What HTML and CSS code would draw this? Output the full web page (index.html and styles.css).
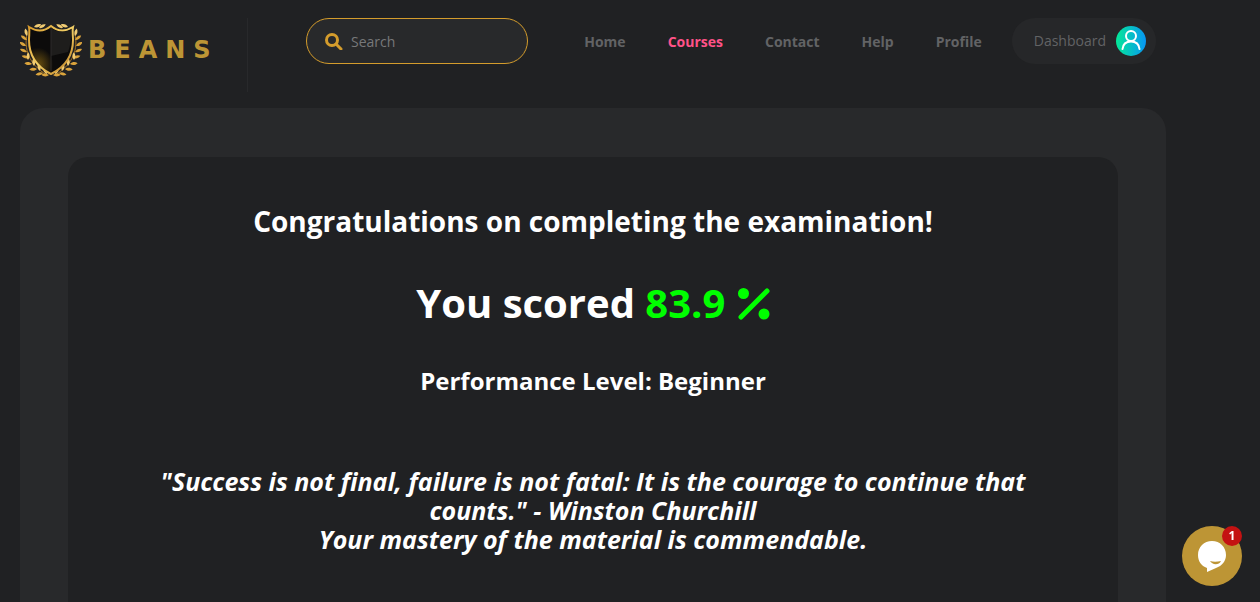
FILE: index.html
```
<!DOCTYPE html>
<html lang="en">
<head>
    <meta charset="UTF-8">
    <meta name="viewport" content="width=device-width, initial-scale=1">
    <title>Beans</title>
    <link rel="stylesheet" href="styles.css">
</head>
<body>
<header class="header">
    <a class="brand" href="#">
        <svg class="brand-logo" viewBox="0 0 62 56" aria-hidden="true">
            <defs>
                <linearGradient id="gold" x1="0" y1="0" x2="1" y2="1">
                    <stop offset="0" stop-color="#d99b2b"/>
                    <stop offset="0.5" stop-color="#f3d067"/>
                    <stop offset="1" stop-color="#b9791c"/>
                </linearGradient>
                <radialGradient id="shine" cx="0.2" cy="0.8" r="0.35">
                    <stop offset="0" stop-color="#6b5110"/>
                    <stop offset="1" stop-color="#0c0b0b"/>
                </radialGradient>
                <path id="leaf" d="M0 0C-2 -2.500 -5 -3 -7.500 -1.500C-5.500 1 -2.500 1.500 0 0Z"/>
                <g id="branch">
                    <path d="M7 12C4 26 8 42 27 53" fill="none" stroke="#a87522"/>
                    <g fill="#dba43c">
                        <use href="#leaf" transform="translate(7 18) rotate(25)"/>
                        <use href="#leaf" transform="translate(6 24) rotate(20)"/>
                        <use href="#leaf" transform="translate(7 30) rotate(12)"/>
                        <use href="#leaf" transform="translate(9 36) rotate(5)"/>
                        <use href="#leaf" transform="translate(12 42) rotate(-5)"/>
                        <use href="#leaf" transform="translate(17 47) rotate(-15)"/>
                        <use href="#leaf" transform="translate(23 51) rotate(-25)"/>
                        <use href="#leaf" transform="translate(29 53) rotate(-10)"/>
                    </g>
                    <g fill="#f0cb72">
                        <use href="#leaf" transform="translate(7 14) rotate(65)"/>
                        <use href="#leaf" transform="translate(8 38) rotate(80)"/>
                        <use href="#leaf" transform="translate(14 44) rotate(75)"/>
                        <use href="#leaf" transform="translate(20 49) rotate(65)"/>
                        <use href="#leaf" transform="translate(27 52) rotate(50)"/>
                        <use href="#leaf" transform="translate(14 5) rotate(150)"/>
                        <use href="#leaf" transform="translate(19 6) rotate(140)"/>
                    </g>
                </g>
            </defs>
            <use href="#branch"/>
            <use href="#branch" transform="translate(62 0) scale(-1 1)"/>
            <path d="M31 4C25 9 17 10 9 5C10 9 9 13 9 18C9 34 17 45 31 52C45 45 53 34 53 18C53 13 52 9 53 5C45 10 37 9 31 4Z" fill="url(#shine)" stroke="url(#gold)" stroke-width="2"/>
            <path d="M31 6C36 10 44 11 51 8C51 15 51 23 48 30L31 34Z" fill="#1e1d1c"/>
            <path d="M31 6V49" stroke="#2c2b2a"/>
        </svg>
        <span class="brand-name">BEANS</span>
    </a>

    <form class="search" role="search">
        <svg class="search-icon" viewBox="0 0 18 18" aria-hidden="true">
            <circle cx="7" cy="8" r="5.500"/>
            <path d="M11 12L16 17"/>
        </svg>
        <input class="search-input" type="search" placeholder="Search" aria-label="Search">
    </form>

    <nav class="nav">
        <a href="#">Home</a>
        <a class="current" href="#">Courses</a>
        <a href="#">Contact</a>
        <a href="#">Help</a>
        <a href="#">Profile</a>
    </nav>

    <a class="dashboard" href="#">
        <span>Dashboard</span>
        <svg class="avatar" viewBox="0 0 30 30" aria-hidden="true">
            <defs>
                <linearGradient id="avatar-bg">
                    <stop offset="0" stop-color="#04e896"/>
                    <stop offset="1" stop-color="#0796f5"/>
                </linearGradient>
            </defs>
            <circle cx="15" cy="15" r="15" fill="url(#avatar-bg)"/>
            <circle cx="15" cy="10" r="5" fill="none" stroke="#fff" stroke-width="2"/>
            <path d="M6.500 23C7 18.500 10 15.500 15 15.500S23 18.500 23.500 23" fill="none" stroke="#fff" stroke-width="2" stroke-linecap="round"/>
        </svg>
    </a>
</header>

<main class="panel">
    <section class="result">
        <h1 class="title">Congratulations on completing the examination!</h1>
        <p class="score">You scored
            <span class="score-value">83.9
                <svg class="percent" viewBox="0 0 32 32" role="img" aria-label="percent">
                    <circle cx="5.500" cy="5.500" r="5.500"/>
                    <circle cx="26" cy="26" r="5.500"/>
                    <path d="M3 29L29 3"/>
                </svg>
            </span>
        </p>
        <h2 class="level">Performance Level: Beginner</h2>
        <div class="quote">
            <p>"Success is not final, failure is not fatal: It is the courage to continue that counts." - Winston Churchill</p>
            <p>Your mastery of the material is commendable.</p>
        </div>
    </section>
</main>

<button class="chat" type="button" aria-label="Open chat, 1 new message">
    <svg class="chat-icon" viewBox="0 0 30 32" aria-hidden="true">
        <path d="M15 1C7 1 1 7 1 15C1 21 4 26 10 28V32L19 28C25 26 29 21 29 15C29 7 23 1 15 1Z" fill="#fff"/>
        <path d="M13 21C16 22 20 22 24 21C22 25.500 15 25 13 21Z" fill="#bd9535"/>
    </svg>
    <span class="chat-badge">1</span>
</button>
</body>
</html>
```
FILE: styles.css
```
* {
    box-sizing: border-box;
    margin: 0;
    padding: 0;
}
body {
    display: flex;
    flex-direction: column;
    min-height: 100vh;
    background-color: #202123;
    color: #fff;
    font-family: "Open Sans", sans-serif;
    font-size: 14px;
}
a {
    color: inherit;
    text-decoration: none;
}

/* header */
.header {
    display: flex;
    align-items: flex-start;
    padding: 18px 104px 16px 20px;
}
.brand {
    display: flex;
    align-items: center;
    gap: 6px;
    width: 228px;
    height: 74px;
    padding-bottom: 10px;
    border-right: 1px solid #28292b;
}
.brand-logo {
    width: 62px;
    height: 56px;
}
.brand-name {
    color: #bd9535;
    font-family: "DejaVu Sans", sans-serif;
    font-size: 24px;
    font-weight: bold;
    letter-spacing: 8px;
}
.search {
    display: flex;
    align-items: center;
    flex: 1;
    gap: 8px;
    height: 46px;
    margin-left: 58px;
    padding: 0 18px;
    border: 1px solid #d49c2c;
    border-radius: 23px;
    background-color: #28292b;
}
.search-icon {
    flex: none;
    width: 18px;
    height: 18px;
    fill: none;
    stroke: #d49c2c;
    stroke-width: 3;
    stroke-linecap: round;
}
.search-input {
    width: 100%;
    min-width: 0;
    border: 0;
    outline: 0;
    background: none;
    color: #fff;
    font: inherit;
}
.search-input::placeholder {
    color: #77787a;
}
.nav {
    display: flex;
    gap: 42px;
    margin-left: 56px;
    color: #626365;
    font-weight: bold;
    line-height: 48px;
}
.nav .current {
    color: #ff5288;
}
.dashboard {
    display: flex;
    align-items: center;
    gap: 10px;
    height: 46px;
    margin-left: 30px;
    padding: 0 10px 0 22px;
    border-radius: 23px;
    background-color: #262729;
    color: #626365;
}
.dashboard span {
    padding-bottom: 2px;
}
.avatar {
    width: 30px;
    height: 30px;
}

/* result */
.panel {
    display: flex;
    flex: 1;
    margin: 0 94px 0 20px;
    padding: 49px 48px 0;
    border-radius: 24px 24px 0 0;
    background-color: #28292b;
}
.result {
    flex: 1;
    padding: 48px;
    border-radius: 20px 20px 0 0;
    background-color: #202123;
    font-weight: bold;
    line-height: 1.2;
    text-align: center;
}
.title {
    font-size: 28px;
}
.score {
    margin-top: 40px;
    font-size: 40px;
}
.score-value {
    color: #0f0;
}
.percent {
    width: 32px;
    height: 32px;
    margin-left: 2px;
    vertical-align: -2px;
    fill: #0f0;
    stroke: #0f0;
    stroke-width: 5;
    stroke-linecap: round;
}
.percent circle {
    stroke: none;
}
.level {
    margin-top: 40px;
    font-size: 24px;
}
.quote {
    margin-top: 72px;
    font-size: 25px;
    font-style: italic;
    line-height: 29px;
}

/* chat button */
.chat {
    position: fixed;
    right: 18px;
    bottom: 16px;
    display: flex;
    align-items: center;
    justify-content: center;
    width: 60px;
    height: 60px;
    border: 0;
    border-radius: 50%;
    background-color: #bd9535;
    cursor: pointer;
}
.chat-icon {
    width: 30px;
    height: 32px;
}
.chat-badge {
    position: absolute;
    top: 0;
    right: 0;
    width: 20px;
    border-radius: 50%;
    background-color: #c41212;
    color: #fff;
    font: bold 12px/20px "Open Sans", sans-serif;
}
```
